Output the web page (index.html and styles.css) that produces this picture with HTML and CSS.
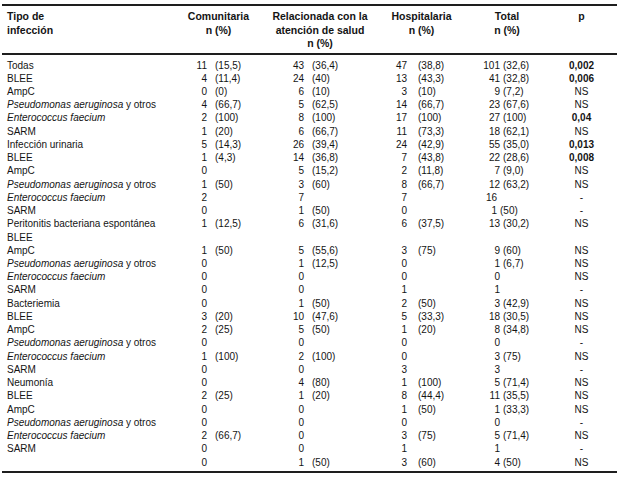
FILE: index.html
```html
<!DOCTYPE html>
<html lang="es">
<head>
<meta charset="utf-8">
<title>Tabla</title>
<link rel="stylesheet" href="styles.css">
</head>
<body>
<div class="wrap">
<table class="tbl">
<colgroup>
<col class="w-lab"><col class="w-com"><col class="w-rel"><col class="w-hos"><col class="w-tot"><col class="w-p">
</colgroup>
<thead>
<tr>
<th class="lab">Tipo de<br>infección</th>
<th>Comunitaria<br>n (%)</th>
<th>Relacionada con la<br>atención de salud<br>n (%)</th>
<th>Hospitalaria<br>n (%)</th>
<th>Total<br>n (%)</th>
<th class="ph">p</th>
</tr>
</thead>
<tbody>
<tr><td class="lab">Todas</td><td class="com"><span class="n">11</span><span class="pc">(15,5)</span></td><td class="rel"><span class="n">43</span><span class="pc">(36,4)</span></td><td class="hos"><span class="n">47</span><span class="pc">(38,8)</span></td><td class="tot"><span class="n">101</span><span class="pc">(32,6)</span></td><td class="p b">0,002</td></tr>
<tr><td class="lab">BLEE</td><td class="com"><span class="n">4</span><span class="pc">(11,4)</span></td><td class="rel"><span class="n">24</span><span class="pc">(40)</span></td><td class="hos"><span class="n">13</span><span class="pc">(43,3)</span></td><td class="tot"><span class="n">41</span><span class="pc">(32,8)</span></td><td class="p b">0,006</td></tr>
<tr><td class="lab">AmpC</td><td class="com"><span class="n">0</span><span class="pc">(0)</span></td><td class="rel"><span class="n">6</span><span class="pc">(10)</span></td><td class="hos"><span class="n">3</span><span class="pc">(10)</span></td><td class="tot"><span class="n">9</span><span class="pc">(7,2)</span></td><td class="p">NS</td></tr>
<tr><td class="lab"><i>Pseudomonas aeruginosa</i> y otros</td><td class="com"><span class="n">4</span><span class="pc">(66,7)</span></td><td class="rel"><span class="n">5</span><span class="pc">(62,5)</span></td><td class="hos"><span class="n">14</span><span class="pc">(66,7)</span></td><td class="tot"><span class="n">23</span><span class="pc">(67,6)</span></td><td class="p">NS</td></tr>
<tr><td class="lab"><i>Enterococcus faecium</i></td><td class="com"><span class="n">2</span><span class="pc">(100)</span></td><td class="rel"><span class="n">8</span><span class="pc">(100)</span></td><td class="hos"><span class="n">17</span><span class="pc">(100)</span></td><td class="tot"><span class="n">27</span><span class="pc">(100)</span></td><td class="p b">0,04</td></tr>
<tr><td class="lab">SARM</td><td class="com"><span class="n">1</span><span class="pc">(20)</span></td><td class="rel"><span class="n">6</span><span class="pc">(66,7)</span></td><td class="hos"><span class="n">11</span><span class="pc">(73,3)</span></td><td class="tot"><span class="n">18</span><span class="pc">(62,1)</span></td><td class="p">NS</td></tr>
<tr><td class="lab">Infección urinaria</td><td class="com"><span class="n">5</span><span class="pc">(14,3)</span></td><td class="rel"><span class="n">26</span><span class="pc">(39,4)</span></td><td class="hos"><span class="n">24</span><span class="pc">(42,9)</span></td><td class="tot"><span class="n">55</span><span class="pc">(35,0)</span></td><td class="p b">0,013</td></tr>
<tr><td class="lab">BLEE</td><td class="com"><span class="n">1</span><span class="pc">(4,3)</span></td><td class="rel"><span class="n">14</span><span class="pc">(36,8)</span></td><td class="hos"><span class="n">7</span><span class="pc">(43,8)</span></td><td class="tot"><span class="n">22</span><span class="pc">(28,6)</span></td><td class="p b">0,008</td></tr>
<tr><td class="lab">AmpC</td><td class="com"><span class="n">0</span></td><td class="rel"><span class="n">5</span><span class="pc">(15,2)</span></td><td class="hos"><span class="n">2</span><span class="pc">(11,8)</span></td><td class="tot"><span class="n">7</span><span class="pc">(9,0)</span></td><td class="p">NS</td></tr>
<tr><td class="lab"><i>Pseudomonas aeruginosa</i> y otros</td><td class="com"><span class="n">1</span><span class="pc">(50)</span></td><td class="rel"><span class="n">3</span><span class="pc">(60)</span></td><td class="hos"><span class="n">8</span><span class="pc">(66,7)</span></td><td class="tot"><span class="n">12</span><span class="pc">(63,2)</span></td><td class="p">NS</td></tr>
<tr><td class="lab"><i>Enterococcus faecium</i></td><td class="com"><span class="n">2</span></td><td class="rel"><span class="n">7</span></td><td class="hos"><span class="n">7</span></td><td class="tot"><span class="n nl">16</span></td><td class="p">-</td></tr>
<tr><td class="lab">SARM</td><td class="com"><span class="n">0</span></td><td class="rel"><span class="n">1</span><span class="pc">(50)</span></td><td class="hos"><span class="n">0</span></td><td class="tot"><span class="n nl">1</span><span class="pc">(50)</span></td><td class="p">-</td></tr>
<tr><td class="lab">Peritonitis bacteriana espontánea</td><td class="com"><span class="n">1</span><span class="pc">(12,5)</span></td><td class="rel"><span class="n">6</span><span class="pc">(31,6)</span></td><td class="hos"><span class="n">6</span><span class="pc">(37,5)</span></td><td class="tot"><span class="n">13</span><span class="pc">(30,2)</span></td><td class="p">NS</td></tr>
<tr><td class="lab">BLEE</td><td class="com"></td><td class="rel"></td><td class="hos"></td><td class="tot"></td><td class="p"></td></tr>
<tr><td class="lab">AmpC</td><td class="com"><span class="n">1</span><span class="pc">(50)</span></td><td class="rel"><span class="n">5</span><span class="pc">(55,6)</span></td><td class="hos"><span class="n">3</span><span class="pc">(75)</span></td><td class="tot"><span class="n">9</span><span class="pc">(60)</span></td><td class="p">NS</td></tr>
<tr><td class="lab"><i>Pseudomonas aeruginosa</i> y otros</td><td class="com"><span class="n">0</span></td><td class="rel"><span class="n">1</span><span class="pc">(12,5)</span></td><td class="hos"><span class="n">0</span></td><td class="tot"><span class="n">1</span><span class="pc">(6,7)</span></td><td class="p">NS</td></tr>
<tr><td class="lab"><i>Enterococcus faecium</i></td><td class="com"><span class="n">0</span></td><td class="rel"><span class="n">0</span></td><td class="hos"><span class="n">0</span></td><td class="tot"><span class="n">0</span></td><td class="p">NS</td></tr>
<tr><td class="lab">SARM</td><td class="com"><span class="n">0</span></td><td class="rel"><span class="n">0</span></td><td class="hos"><span class="n">1</span></td><td class="tot"><span class="n">1</span></td><td class="p">-</td></tr>
<tr><td class="lab">Bacteriemia</td><td class="com"><span class="n">0</span></td><td class="rel"><span class="n">1</span><span class="pc">(50)</span></td><td class="hos"><span class="n">2</span><span class="pc">(50)</span></td><td class="tot"><span class="n">3</span><span class="pc">(42,9)</span></td><td class="p">NS</td></tr>
<tr><td class="lab">BLEE</td><td class="com"><span class="n">3</span><span class="pc">(20)</span></td><td class="rel"><span class="n">10</span><span class="pc">(47,6)</span></td><td class="hos"><span class="n">5</span><span class="pc">(33,3)</span></td><td class="tot"><span class="n">18</span><span class="pc">(30,5)</span></td><td class="p">NS</td></tr>
<tr><td class="lab">AmpC</td><td class="com"><span class="n">2</span><span class="pc">(25)</span></td><td class="rel"><span class="n">5</span><span class="pc">(50)</span></td><td class="hos"><span class="n">1</span><span class="pc">(20)</span></td><td class="tot"><span class="n">8</span><span class="pc">(34,8)</span></td><td class="p">NS</td></tr>
<tr><td class="lab"><i>Pseudomonas aeruginosa</i> y otros</td><td class="com"><span class="n">0</span></td><td class="rel"><span class="n">0</span></td><td class="hos"><span class="n">0</span></td><td class="tot"><span class="n">0</span></td><td class="p">-</td></tr>
<tr><td class="lab"><i>Enterococcus faecium</i></td><td class="com"><span class="n">1</span><span class="pc">(100)</span></td><td class="rel"><span class="n">2</span><span class="pc">(100)</span></td><td class="hos"><span class="n">0</span></td><td class="tot"><span class="n">3</span><span class="pc">(75)</span></td><td class="p">NS</td></tr>
<tr><td class="lab">SARM</td><td class="com"><span class="n">0</span></td><td class="rel"><span class="n">0</span></td><td class="hos"><span class="n">3</span></td><td class="tot"><span class="n">3</span></td><td class="p">-</td></tr>
<tr><td class="lab">Neumonía</td><td class="com"><span class="n">0</span></td><td class="rel"><span class="n">4</span><span class="pc">(80)</span></td><td class="hos"><span class="n">1</span><span class="pc">(100)</span></td><td class="tot"><span class="n">5</span><span class="pc">(71,4)</span></td><td class="p">NS</td></tr>
<tr><td class="lab">BLEE</td><td class="com"><span class="n">2</span><span class="pc">(25)</span></td><td class="rel"><span class="n">1</span><span class="pc">(20)</span></td><td class="hos"><span class="n">8</span><span class="pc">(44,4)</span></td><td class="tot"><span class="n">11</span><span class="pc">(35,5)</span></td><td class="p">NS</td></tr>
<tr><td class="lab">AmpC</td><td class="com"><span class="n">0</span></td><td class="rel"><span class="n">0</span></td><td class="hos"><span class="n">1</span><span class="pc">(50)</span></td><td class="tot"><span class="n">1</span><span class="pc">(33,3)</span></td><td class="p">NS</td></tr>
<tr><td class="lab"><i>Pseudomonas aeruginosa</i> y otros</td><td class="com"><span class="n">0</span></td><td class="rel"><span class="n">0</span></td><td class="hos"><span class="n">0</span></td><td class="tot"><span class="n">0</span></td><td class="p">-</td></tr>
<tr><td class="lab"><i>Enterococcus faecium</i></td><td class="com"><span class="n">2</span><span class="pc">(66,7)</span></td><td class="rel"><span class="n">0</span></td><td class="hos"><span class="n">3</span><span class="pc">(75)</span></td><td class="tot"><span class="n">5</span><span class="pc">(71,4)</span></td><td class="p">NS</td></tr>
<tr><td class="lab">SARM</td><td class="com"><span class="n">0</span></td><td class="rel"><span class="n">0</span></td><td class="hos"><span class="n">1</span></td><td class="tot"><span class="n">1</span></td><td class="p">-</td></tr>
<tr><td class="lab"></td><td class="com"><span class="n">0</span></td><td class="rel"><span class="n">1</span><span class="pc">(50)</span></td><td class="hos"><span class="n">3</span><span class="pc">(60)</span></td><td class="tot"><span class="n">4</span><span class="pc">(50)</span></td><td class="p">NS</td></tr>
</tbody>
</table>
</div>
</body>
</html>
```
FILE: styles.css
```css
html, body {
  margin: 0;
  padding: 0;
  background: #ffffff;
}
body {
  font-family: "Liberation Sans", Arial, sans-serif;
  color: #141414;
}
.wrap {
  padding: 4px 8px 0 2px;
}
.tbl {
  width: 615px;
  table-layout: fixed;
  border-collapse: collapse;
  border-top: 2px solid #1e1e1e;
  border-bottom: 2px solid #1e1e1e;
}
.w-lab { width: 183px; }
.w-com { width: 67px; }
.w-rel { width: 136px; }
.w-hos { width: 67px; }
.w-tot { width: 104px; }
.w-p { width: 58px; }

.tbl th {
  font-size: 10.5px;
  font-weight: bold;
  line-height: 13.5px;
  text-align: center;
  vertical-align: top;
  padding: 4px 0 2px 0;
  border-bottom: 2px solid #1e1e1e;
  white-space: nowrap;
}
.tbl th.lab {
  text-align: left;
  padding-left: 5px;
}
.tbl th.ph {
  padding-right: 13px;
}
.tbl td {
  font-size: 10px;
  line-height: 13.24px;
  padding: 0;
  white-space: nowrap;
  vertical-align: top;
}
.tbl tbody tr:first-child td {
  padding-top: 4px;
}
.tbl tbody tr:last-child td {
  padding-bottom: 2px;
}
.tbl td.lab {
  padding-left: 5px;
}
.tbl td.p {
  text-align: center;
  padding-right: 13px;
}
.tbl td.b {
  font-weight: bold;
}
.n {
  display: inline-block;
  text-align: right;
}
.com .n { width: 22px; }
.com .pc { margin-left: 8px; }
.rel .n { width: 52px; }
.rel .pc { margin-left: 8px; }
.hos .n { width: 19px; }
.hos .pc { margin-left: 11px; }
.tot .n { width: 45px; }
.tot .pc { margin-left: 3px; }
.tot .nl { width: 42px; }
```
